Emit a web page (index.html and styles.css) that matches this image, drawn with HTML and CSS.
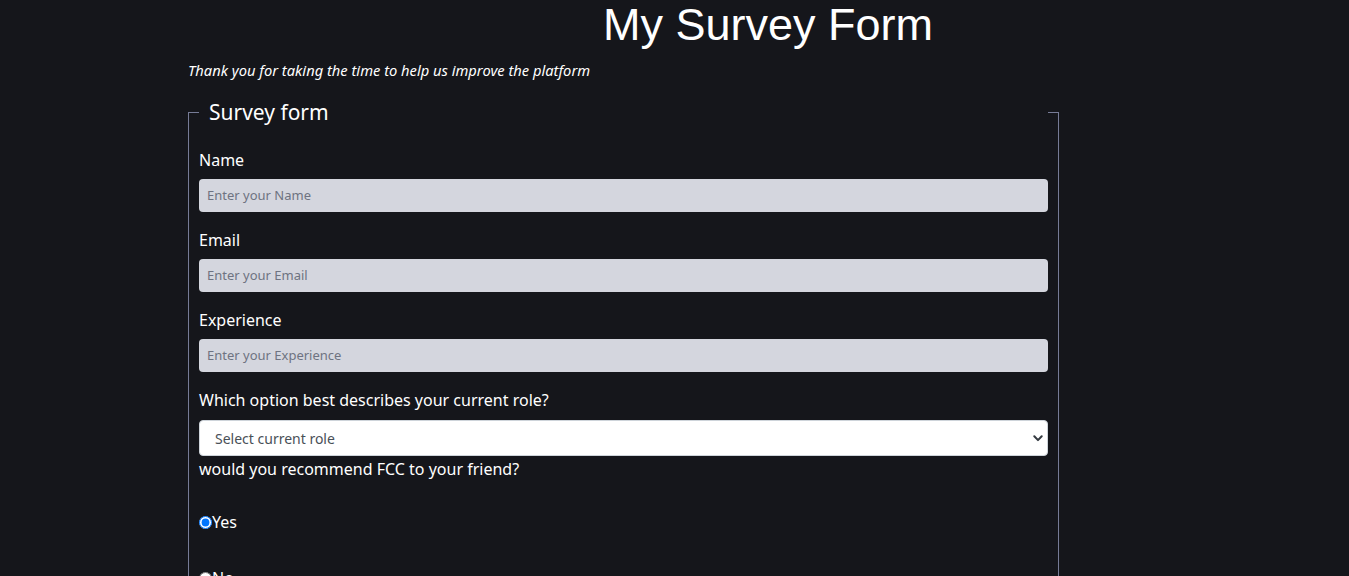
FILE: index.html
```html
<!DOCTYPE html>
<html lang="en">
<head>
<meta charset="utf-8">
<title>My Survey Form</title>
<link rel="stylesheet" href="styles.css">
</head>
<body>
<main class="page">
  <h1 id="title" class="title">My Survey Form</h1>
  <p id="description" class="description">Thank you for taking the time to help us improve the platform</p>
  <form id="survey-form" class="survey">
    <fieldset class="box">
      <legend class="legend">Survey form</legend>
      <div class="group">
        <label class="label" for="name" id="name-label">Name</label>
        <input class="field" type="text" id="name" placeholder="Enter your Name">
      </div>
      <div class="group">
        <label class="label" for="email" id="email-label">Email</label>
        <input class="field" type="email" id="email" placeholder="Enter your Email">
      </div>
      <div class="group">
        <label class="label" for="number" id="number-label">Experience</label>
        <input class="field" type="number" id="number" placeholder="Enter your Experience">
      </div>
      <div class="group">
        <label class="label" for="dropdown">Which option best describes your current role?</label>
        <div class="select-wrap">
          <select class="select" id="dropdown">
            <option>Select current role</option>
            <option>Student</option>
            <option>Full time job</option>
            <option>Prefer not to say</option>
          </select>
          <svg class="chevron" width="10" height="7" viewBox="0 0 10 7"><path d="M1.3 1.3l3.7 3.8 3.7-3.8" fill="none" stroke="#343a40" stroke-width="2" stroke-linecap="round" stroke-linejoin="round"/></svg>
        </div>
      </div>
      <p class="question">would you recommend FCC to your friend?</p>
      <label class="radio-row"><input class="radio" type="radio" name="recommend" value="yes" checked>Yes</label>
      <label class="radio-row"><input class="radio" type="radio" name="recommend" value="no">No</label>
    </fieldset>
  </form>
</main>
</body>
</html>
```
FILE: styles.css
```css
html, body {
  margin: 0;
  padding: 0;
  background: #15161b;
  color: #ffffff;
  font-family: "Noto Sans", "Open Sans", sans-serif;
}
.page {
  margin-left: 188px;
  width: 1160px;
}
.title {
  margin: 0;
  padding-top: 0;
  height: 48px;
  line-height: 50px;
  text-align: center;
  font-family: "Liberation Sans", Arial, sans-serif;
  font-weight: 400;
  font-size: 45px;
}
.description {
  margin: 12px 0 0 0;
  font-style: italic;
  font-size: 14.7px;
  line-height: 20px;
}
.survey {
  width: 871px;
  margin-top: 18px;
}
.box {
  margin: 0;
  padding: 22px 10px 0 10px;
  border: 1px solid #767b96;
  border-bottom: none;
}
.legend {
  box-sizing: border-box;
  width: 100%;
  padding: 0 10px;
  font-size: 21px;
  line-height: 28px;
}
.group {
  display: flex;
  flex-direction: column;
}
.label {
  font-size: 16px;
  line-height: 24px;
  margin-bottom: 7px;
}
.field {
  box-sizing: border-box;
  height: 33px;
  margin: 0 0 16px 0;
  padding: 0 8px 2px 8px;
  border: none;
  border-radius: 4px;
  background: #d4d6de;
  font-family: "Noto Sans", sans-serif;
  font-size: 13px;
  color: #212529;
}
.field::placeholder {
  color: #6e7381;
}
.select-wrap {
  position: relative;
  margin-top: 1px;
}
.select {
  box-sizing: border-box;
  width: 100%;
  height: 36px;
  padding: 0 15px;
  border: 1px solid #ced4da;
  border-radius: 4px;
  background: #ffffff;
  color: #495057;
  font-family: "Noto Sans", sans-serif;
  font-size: 14px;
  appearance: none;
  -webkit-appearance: none;
}
.chevron {
  position: absolute;
  right: 5px;
  top: 15px;
}
.question {
  margin: 1px 0 0 0;
  font-size: 16px;
  line-height: 24px;
}
.radio-row {
  display: flex;
  align-items: center;
  font-size: 16px;
  line-height: 24px;
  margin-top: 29px;
}
.radio-row + .radio-row {
  margin-top: 32px;
}
.radio {
  margin: 0;
  width: 13px;
  height: 13px;
}
```
